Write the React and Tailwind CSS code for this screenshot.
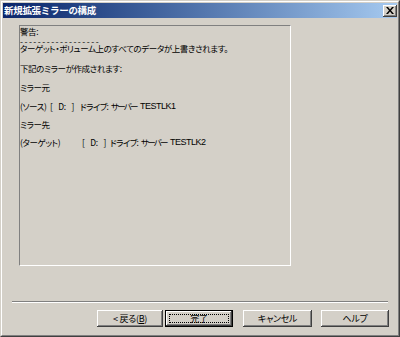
import React from "react";

const jp = { fontFamily: '"Noto Sans CJK JP", "Noto Sans", sans-serif' };
const lat = { fontFamily: '"Liberation Sans", Arial, sans-serif' };

function Btn({ children, w, def }) {
  return (
    <div
      className={
        "relative flex items-center justify-center h-[17px] text-[9px] text-black bg-[#d4d0c8] " +
        (def
          ? "border border-black shadow-[inset_-1px_-1px_#404040,inset_1px_1px_#fff,inset_-2px_-2px_#808080]"
          : "shadow-[inset_-1px_-1px_#404040,inset_1px_1px_#fff,inset_-2px_-2px_#808080]")
      }
      style={{ width: w }}
    >
      {def && (
        <div className="absolute left-[3px] top-[3px] right-[3px] bottom-[3px] border border-dotted border-black" />
      )}
      <span className="relative leading-none [font-feature-settings:'palt'] tracking-[-0.3px]">{children}</span>
    </div>
  );
}

function Drive({ label, labelW, bracketW, server }) {
  return (
    <div className="h-[12px] leading-[12px] flex whitespace-pre">
      <span className="shrink-0" style={{ width: labelW }}>{label}</span>
      <span className="shrink-0 flex" style={{ width: bracketW }}>
        <span className="w-[24px] flex justify-between">
          <span>[</span>
          <span>D:</span>
          <span>]</span>
        </span>
      </span>
      <span className="shrink-0 w-[31px] tracking-[-0.6px]">ドライブ:</span>
      <span className="shrink-0 w-[29px] tracking-[-1.8px]">サーバー</span>
      <span className="text-[9px] tracking-[-0.5px]" style={lat}>{server}</span>
    </div>
  );
}

export default function App() {
  return (
    <div
      className="w-[400px] h-[337px] bg-[#d4d0c8] border border-t-[#d4d0c8] border-l-[#d4d0c8] border-b-[#404040] border-r-[#404040]"
      style={jp}
    >
      <div className="w-full h-full border border-t-white border-l-white border-b-[#808080] border-r-[#808080] p-px flex flex-col">
        {/* title bar */}
        <div className="h-[15px] flex items-center justify-between bg-gradient-to-r from-[#0a246a] to-[#a6caf0] pl-[1px] pr-0">
          <span className="text-white font-bold text-[9.5px] leading-none tracking-[-0.3px]">
            新規拡張ミラーの構成
          </span>
          <div className="w-[14px] h-[12px] bg-[#d4d0c8] shadow-[inset_-1px_-1px_#404040,inset_1px_1px_#fff,inset_-2px_-2px_#808080] flex items-center justify-center">
            <svg width="8" height="7" viewBox="0 0 8 7">
              <path d="M0 0h2l2 2.5L6 0h2L5 3.5 8 7H6L4 4.5 2 7H0l3-3.5z" fill="#000" />
            </svg>
          </div>
        </div>

        {/* body */}
        <div className="pl-[16px] pt-[7px]">
          <div className="w-[272px] h-[241px] border border-t-[#808080] border-l-[#808080] border-b-white border-r-white text-black text-[8.5px] [font-feature-settings:'palt'] tracking-[-0.4px]">
            <div className="h-[11px] leading-[11px]">警告:</div>
            <div className="h-[5px] leading-[3px] overflow-visible">
              <span className="relative top-[3px] tracking-[1.5px]">------------------</span>
            </div>
            <div className="h-[12px] leading-[12px]">
              ターゲット・ボリューム上のすべてのデータが上書きされます。
            </div>
            <div className="h-[12px] leading-[12px] mt-[8px]">下記のミラーが作成されます:</div>
            <div className="h-[12px] leading-[12px] mt-[7px]">ミラー元</div>
            <div className="mt-[7px]">
              <Drive label="(ソース)" labelW={30} bracketW={30} server="TESTLK1" />
            </div>
            <div className="h-[12px] leading-[12px] mt-[6px]">ミラー先</div>
            <div className="mt-[6px]">
              <Drive label="(ターゲット)" labelW={62} bracketW={28} server="TESTLK2" />
            </div>
          </div>
        </div>

        {/* separator */}
        <div className="ml-[9px] mt-[35px] w-[376px] h-[2px] border-t border-t-[#808080] border-b border-b-white" />

        {/* buttons */}
        <div className="mt-[7px] flex justify-end pr-[8px]">
          <Btn w={66}>
            {"< 戻る("}
            <span className="underline">B</span>
            {")"}
          </Btn>
          <div className="ml-[2px]">
            <Btn w={68} def>
              完了
            </Btn>
          </div>
          <div className="ml-[10px]">
            <Btn w={69}>キャンセル</Btn>
          </div>
          <div className="ml-[9px]">
            <Btn w={68}>ヘルプ</Btn>
          </div>
        </div>
      </div>
    </div>
  );
}
